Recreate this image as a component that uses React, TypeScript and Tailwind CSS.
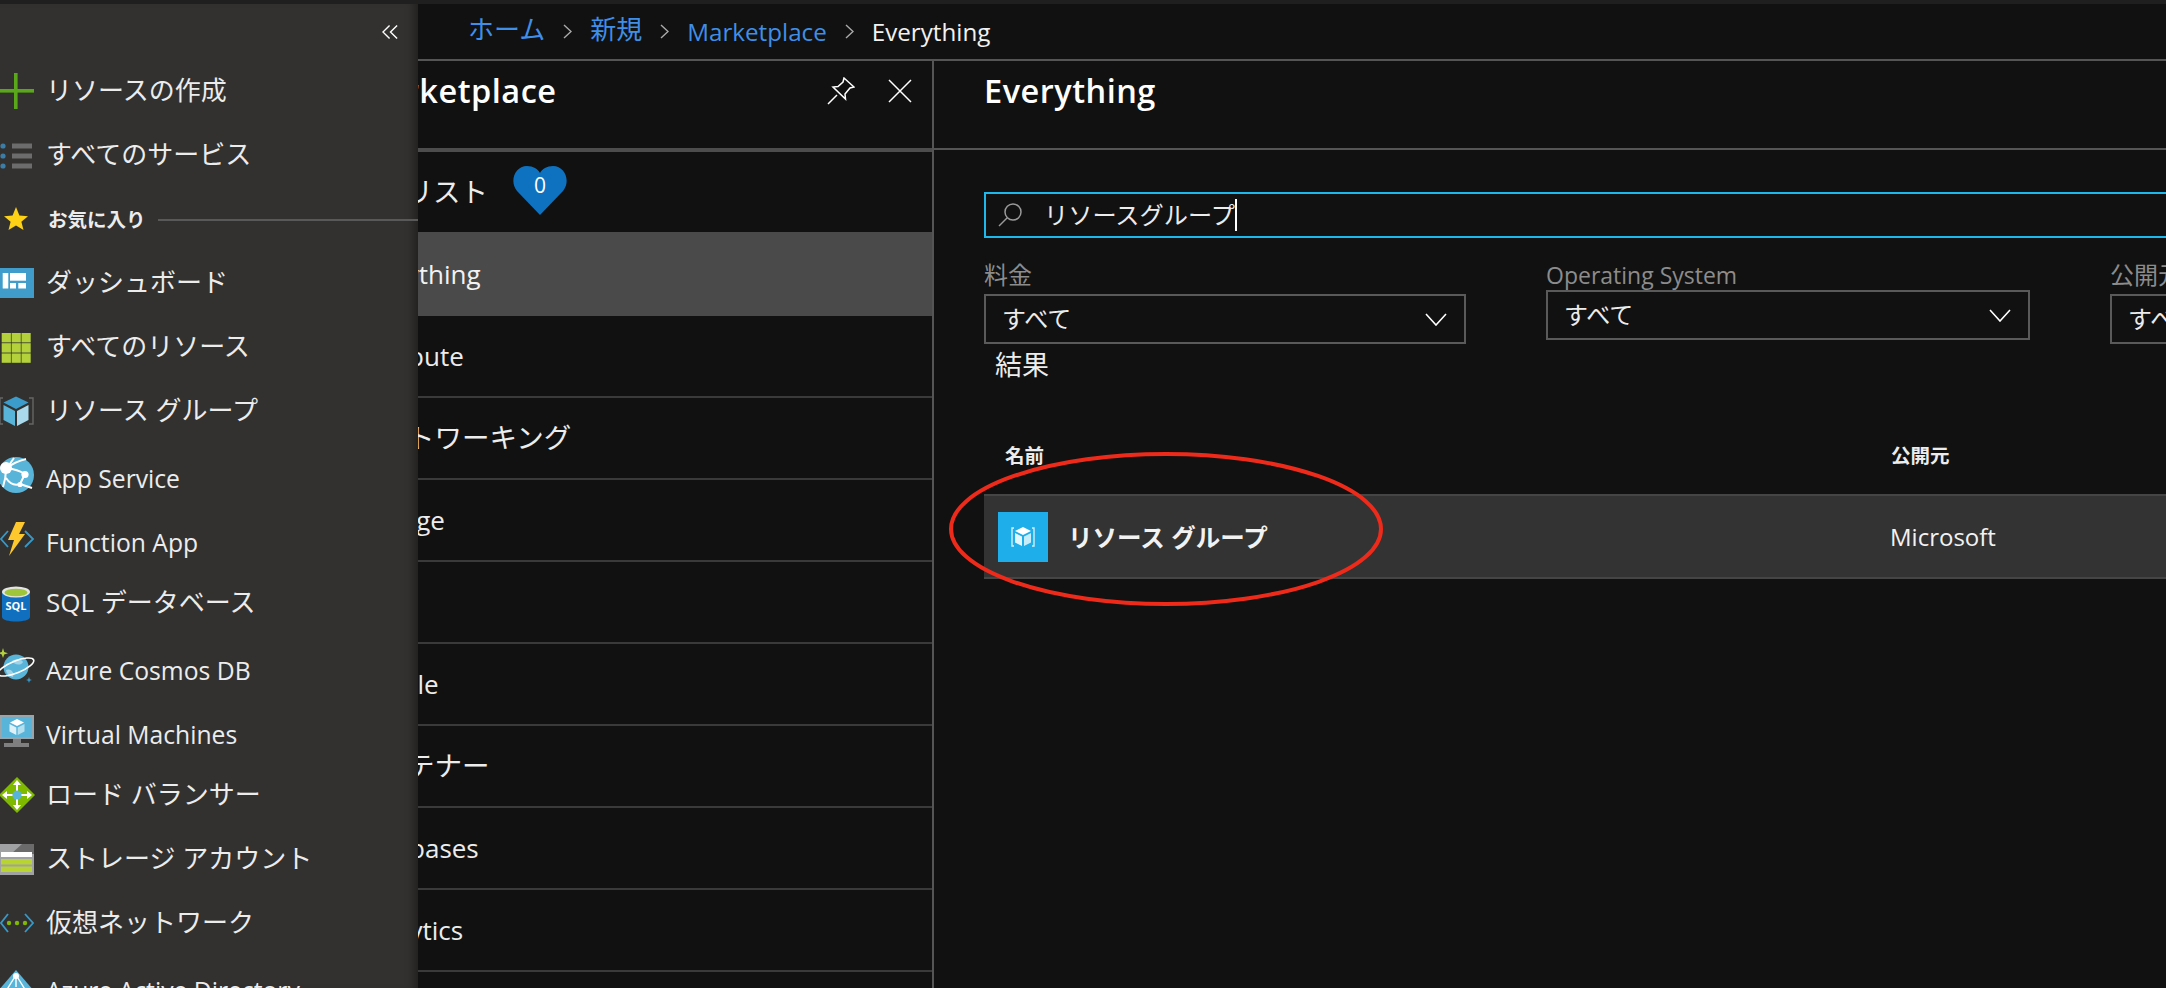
import type { ReactNode } from "react";

// Latin labels sit slightly lower and smaller than the Japanese ones in the reference
const isLatin = (text: string) => /^[\x00-\x7f]+$/.test(text);

function IconBox({ children }: { children: ReactNode }) {
  return (
    <svg viewBox="0 0 36 36" className="w-9 h-9 -ml-0.5 shrink-0 overflow-visible">
      {children}
    </svg>
  );
}

const PlusIcon = () => (
  <IconBox>
    <rect x="16" y="0" width="3.6" height="36" fill="#5ba71c" />
    <rect x="0" y="16" width="36" height="3.6" fill="#5ba71c" />
  </IconBox>
);

const ServicesIcon = () => (
  <IconBox>
    {[9, 19, 29].map((y) => (
      <g key={y}>
        <circle cx="5" cy={y} r="2.6" fill="#3a7ea8" />
        <rect x="14" y={y - 2.5} width="20" height="5" fill="#6c6c6c" />
      </g>
    ))}
  </IconBox>
);

const StarIcon = () => (
  <IconBox>
    <polygon points="18,6 21.4,14.6 30,15.2 23.4,20.8 25.5,29 18,24.5 10.5,29 12.6,20.8 6,15.2 14.6,14.6" fill="#fcd116" />
  </IconBox>
);

const DashboardIcon = () => (
  <IconBox>
    <rect x="2" y="3" width="34" height="30" fill="#3f9ccb" />
    <rect x="4.7" y="8" width="5.6" height="15.5" fill="#fff" />
    <rect x="12" y="8" width="16" height="7.7" fill="#fff" />
    <rect x="12" y="18" width="6" height="5.5" fill="#fff" />
    <rect x="20.3" y="18" width="7.7" height="5.5" fill="#fff" />
  </IconBox>
);

const GridIcon = () => (
  <IconBox>
    {[4, 14.2, 24.4].flatMap((y) =>
      [3.7, 13.6, 23.5].map((x) => <rect key={`${x}-${y}`} x={x} y={y} width="9.2" height="9.4" fill="#b4d13c" />)
    )}
  </IconBox>
);

const CubeIcon = () => (
  <IconBox>
    <path d="M5 5H2L2 31H5M31 5H35V31H31" fill="none" stroke="#666" strokeWidth="1.4" />
    <path d="M18 3.5L30.5 9.5L18 16L5.5 9.5Z" fill="#3b9ccc" />
    <path d="M5.5 12L17 18V33L5.5 27Z" fill="#59b4d9" />
    <path d="M30.5 12L19 18V33L30.5 27Z" fill="#a9d9ea" />
  </IconBox>
);

const AppServiceIcon = () => (
  <IconBox>
    <circle cx="18" cy="18" r="18" fill="#59b4d9" />
    <path d="M9 11L16 1M9 11C14 7 20 4 28 2M9 11C16 12 22 14 27 17M8 12C8 18 7 24 5 30M27 17L22 27M22 27L34 31M22 27C16 29 12 27 8 21" fill="none" stroke="#fff" strokeWidth="2" />
    <circle cx="8" cy="11" r="6" fill="#fff" />
    <circle cx="27" cy="17.5" r="3.6" fill="#fff" />
    <circle cx="22" cy="27.5" r="2.6" fill="#fff" />
  </IconBox>
);

const FunctionIcon = () => (
  <IconBox>
    <path d="M10 10L3 18L10 26M27 10L35 18L27 26" fill="none" stroke="#3999c6" strokeWidth="1.8" />
    <path d="M18 1H27L21 13H27L11 35L16 19H10Z" fill="#fcc82e" />
  </IconBox>
);

const SqlIcon = () => (
  <IconBox>
    <path d="M4 7V32C4 38 32 38 32 32V7Z" fill="#1070bf" />
    <ellipse cx="18" cy="7" rx="14" ry="5.5" fill="#e4e4e4" />
    <ellipse cx="18" cy="7.5" rx="11.5" ry="3.8" fill="#9fc63b" />
    <text x="18" y="25" textAnchor="middle" fontSize="11" fontWeight="700" fill="#fff" fontFamily="Open Sans">SQL</text>
  </IconBox>
);

const CosmosIcon = () => (
  <IconBox>
    <circle cx="18" cy="18" r="12.5" fill="#59b4d9" />
    <path d="M14 12C18 9 24 10 25 13C23 17 16 16 14 12ZM8 21C12 19 17 23 15 28C11 27 8 24 8 21Z" fill="#9fd3e8" />
    <ellipse cx="18" cy="18" rx="19" ry="6" transform="rotate(-22 18 18)" fill="none" stroke="#fff" strokeWidth="1.6" />
    <path d="M5 -1L6.2 3L10 4.2L6.2 5.4L5 9L3.8 5.4L0 4.2L3.8 3Z" fill="#b4d13c" />
    <path d="M31 28L31.8 30.2L34 31L31.8 31.8L31 34L30.2 31.8L28 31L30.2 30.2Z" fill="#3999c6" />
  </IconBox>
);

const VmIcon = () => (
  <IconBox>
    <rect x="2" y="2" width="34" height="24" fill="#9aa5ab" />
    <rect x="4" y="4" width="30" height="20" fill="#59b4d9" />
    <path d="M19 6L26 9.5L19 13L12 9.5Z" fill="#fff" />
    <path d="M11.5 11L18.3 14.5V22L11.5 18.5Z" fill="#dff1f8" />
    <path d="M26.5 11L19.7 14.5V22L26.5 18.5Z" fill="#b4dfee" />
    <rect x="15" y="26" width="8" height="4" fill="#7f7f7f" />
    <rect x="6" y="30" width="25" height="4" fill="#7f7f7f" />
  </IconBox>
);

const BalancerIcon = () => (
  <IconBox>
    <path d="M19 0L37 18L19 36L1 18Z" fill="#7fba00" />
    <path d="M19 5V31M6 18H32" stroke="#fff" strokeWidth="2" />
    <path d="M19 3L23 8H15ZM19 33L23 28H15ZM4 18L9 14V22ZM34 18L29 14V22Z" fill="#fff" />
    <circle cx="19" cy="18" r="4.6" fill="#59b4d9" />
  </IconBox>
);

const StorageIcon = () => (
  <IconBox>
    <rect x="2" y="3" width="34" height="31" fill="#a0a1a2" />
    <path d="M24 3H36V13H13Z" fill="#6b6b6b" />
    <rect x="3" y="11" width="31" height="5" fill="#fff" />
    <rect x="3" y="18" width="31" height="5.5" fill="#b8d432" />
    <rect x="3" y="25.5" width="31" height="5.5" fill="#b8d432" />
  </IconBox>
);

const VnetIcon = () => (
  <IconBox>
    <path d="M10 9L3 18L10 27M27 9L35 18L27 27" fill="none" stroke="#3999c6" strokeWidth="1.8" />
    <circle cx="11" cy="18" r="2.2" fill="#7fba00" />
    <circle cx="19" cy="18" r="2.2" fill="#7fba00" />
    <circle cx="27" cy="18" r="2.2" fill="#7fba00" />
  </IconBox>
);

const DirectoryIcon = () => (
  <IconBox>
    <path d="M18 1L36 22L18 36L0 22Z" fill="#59b4d9" />
    <path d="M18 6L8 22M18 6L28 22M18 6V18" stroke="#fff" strokeWidth="1.4" />
    <circle cx="18" cy="7" r="3" fill="#fff" />
    <circle cx="8" cy="22" r="3" fill="#fff" />
    <circle cx="28" cy="22" r="3" fill="#fff" />
  </IconBox>
);

const navTop = [
  { icon: <PlusIcon />, label: "リソースの作成" },
  { icon: <ServicesIcon />, label: "すべてのサービス" },
];

const navFavorites = [
  { icon: <DashboardIcon />, label: "ダッシュボード" },
  { icon: <GridIcon />, label: "すべてのリソース" },
  { icon: <CubeIcon />, label: "リソース グループ" },
  { icon: <AppServiceIcon />, label: "App Service" },
  { icon: <FunctionIcon />, label: "Function App" },
  { icon: <SqlIcon />, label: "SQL データベース" },
  { icon: <CosmosIcon />, label: "Azure Cosmos DB" },
  { icon: <VmIcon />, label: "Virtual Machines" },
  { icon: <BalancerIcon />, label: "ロード バランサー" },
  { icon: <StorageIcon />, label: "ストレージ アカウント" },
  { icon: <VnetIcon />, label: "仮想ネットワーク" },
  { icon: <DirectoryIcon />, label: "Azure Active Directory" },
];

function NavItem({ icon, label }: { icon: ReactNode; label: string }) {
  const latin = isLatin(label);
  return (
    <div className="flex items-center h-16 shrink-0">
      {icon}
      <span
        className={`text-[#ececec] whitespace-nowrap ${
          latin ? "ml-3 mt-2 text-[24.7px]" : "ml-3 -mt-px text-[26px]"
        }`}
      >
        {label}
      </span>
    </div>
  );
}

function Sidebar() {
  return (
    <aside className="absolute left-0 top-1 bottom-0 w-[418px] flex flex-col overflow-hidden bg-[#32312f] shadow-[inset_-10px_0_8px_-6px_rgba(0,0,0,0.35)]">
      <div className="h-[55px] shrink-0 flex items-center justify-end pr-[19px]">
        <svg viewBox="0 0 18 16" className="w-[17px] h-4" fill="none" stroke="#fff" strokeWidth="1.5">
          <path d="M8 1L1 8L8 15M16 1L9 8L16 15" />
        </svg>
      </div>
      {navTop.map((item) => (
        <NavItem key={item.label} {...item} />
      ))}
      <div className="flex items-center h-16 shrink-0">
        <StarIcon />
        <span className="ml-3.5 mt-0.5 text-[19.5px] font-bold text-[#ececec] whitespace-nowrap">お気に入り</span>
        <div className="ml-3 mt-0.5 flex-1 h-0.5 bg-[#595959]" />
      </div>
      {navFavorites.map((item) => (
        <NavItem key={item.label} {...item} />
      ))}
    </aside>
  );
}

const categories = ["Compute", "ネットワーキング", "Storage", "Web", "Mobile", "コンテナー", "Databases", "Analytics", "AI + Cognitive"];

function MarketplacePanel() {
  return (
    <section className="w-[934px] shrink-0 border-r-2 border-[#555]">
      <header className="h-[91px] pl-[355px] pr-5 flex items-start border-b-4 border-[#4d4d4d]">
        <h2 className="mt-2 text-[32.5px] font-semibold text-white leading-[44px] tracking-[0.5px]">Marketplace</h2>
        <div className="ml-auto flex items-center gap-[33px] mt-4">
          <svg viewBox="0 0 28 28" className="w-7 h-7" fill="none" stroke="#fff" strokeWidth="1.5">
            <path d="M1 27L10 18M17 1L27 10L23 11L18 17L18.5 22L6 10L11 9.5L16 5Z" />
          </svg>
          <svg viewBox="0 0 24 24" className="w-6 h-6" fill="none" stroke="#fff" strokeWidth="1.5">
            <path d="M1 1L23 23M23 1L1 23" />
          </svg>
        </div>
      </header>
      <div className="h-20 pl-[268px] flex items-center">
        <span className="text-[27.5px] text-[#ececec] whitespace-nowrap">ウィッシュリスト</span>
        <div className="relative ml-6 -mt-1 w-14 h-[50px] flex items-center justify-center">
          <svg viewBox="0 0 56 50" className="absolute inset-0 w-14 h-[50px]">
            <path d="M28 50L5 26C-3 16 3 1 15 1C21 1 26 4 28 8C30 4 35 1 41 1C53 1 59 16 51 26Z" fill="#0f72c0" />
          </svg>
          <span className="relative text-[21px] text-white -mt-2">0</span>
        </div>
      </div>
      <div className="h-[84px] pl-[353px] flex items-center bg-[#4a4a4a] text-[26px] text-[#f2f2f2]">Everything</div>
      {categories.map((name) => (
        <div
          key={name}
          className={`h-[82px] flex items-center border-b-2 border-[#3a3a3a] text-[#ececec] whitespace-nowrap ${
            isLatin(name) ? "text-[26px]" : "text-[27.5px]"
          } ${name === "Mobile" || name === "Analytics" ? "pl-[356px]" : "pl-[352px]"}`}
        >
          {name}
        </div>
      ))}
    </section>
  );
}

function Filter({ label, labelClass, width }: { label: string; labelClass: string; width: string }) {
  return (
    <div className={`${width} shrink-0`}>
      <div className={`${labelClass} leading-[30px] text-[#8c8c8c]`}>{label}</div>
      <div className="h-[50px] pl-[16px] pr-[17px] flex items-center justify-between border-2 border-[#5a5a5a] text-[24px] text-[#ececec]">
        <span>すべて</span>
        <svg viewBox="0 0 22 13" className="w-[22px] h-[13px]" fill="none" stroke="#fff" strokeWidth="1.6">
          <path d="M1 1L11 12L21 1" />
        </svg>
      </div>
    </div>
  );
}

function EverythingPanel() {
  return (
    <section className="flex-1 min-w-0">
      <header className="h-[89px] pl-[50px] border-b-2 border-[#555] flex items-start">
        <h2 className="mt-2 text-[32.5px] font-semibold text-white leading-[44px] tracking-[0.5px]">Everything</h2>
      </header>
      <div className="pl-[50px] w-[1400px]">
        <div className="mt-[42px] h-[46px] flex items-center border-2 border-[#1fb8ec]">
          <svg viewBox="0 0 24 24" className="ml-3 w-6 h-6" fill="none" stroke="#9a9a9a" strokeWidth="1.5">
            <circle cx="15" cy="9" r="8" />
            <path d="M9 15L1 23" />
          </svg>
          <span className="ml-[22px] text-[24.2px] text-[#ececec]">リソースグループ</span>
          <div className="w-0.5 h-8 bg-white" />
        </div>
        <div className="mt-[22px] flex items-start gap-20">
          <Filter label="料金" labelClass="h-[34px] text-[24px]" width="w-[482px]" />
          <Filter label="Operating System" labelClass="h-[30px] text-[23px]" width="w-[484px]" />
          <Filter label="公開元" labelClass="h-[34px] text-[24px]" width="w-[300px]" />
        </div>
        <div className="ml-[11px] mt-[3px] h-[36px] text-[27px] leading-[36px] text-[#ececec]">結果</div>
        <div className="h-[111px] pt-[58px] flex text-[19.5px] font-bold text-[#ececec]">
          <span className="w-[907px] pl-[21px]">名前</span>
          <span>公開元</span>
        </div>
        <div className="h-[85px] flex items-center bg-[#333] border-y-2 border-[#454545]">
          <div className="w-[906px] flex items-center pl-3.5">
            <div className="w-[50px] h-[50px] flex items-center justify-center bg-[#1eaeea]">
              <svg viewBox="0 0 26 24" className="w-[26px] h-6">
                <path d="M4 3H2V21H4M22 3H24V21H22" fill="none" stroke="#cfeefb" strokeWidth="1.4" />
                <path d="M13 2L21 6L13 10L5 6Z" fill="#fff" />
                <path d="M5 8L12 11.5V21L5 17.5Z" fill="#e4f6fd" />
                <path d="M21 8L14 11.5V21L21 17.5Z" fill="#c7ecfa" />
              </svg>
            </div>
            <span className="ml-5 mt-[3px] text-[24.5px] font-bold text-[#f2f2f2]">リソース グループ</span>
          </div>
          <span className="text-[24px] text-[#f2f2f2]">Microsoft</span>
        </div>
      </div>
    </section>
  );
}

function Crumb({ children, jp }: { children: ReactNode; jp?: boolean }) {
  return <span className={jp ? "text-[#3f8fe8] text-[26px] -mt-1" : "text-[#3f8fe8] text-[24.2px] mt-0.5"}>{children}</span>;
}

const Sep = () => (
  <svg viewBox="0 0 9 15" className="w-[9px] h-[15px] mx-[18px]" fill="none" stroke="#aaa" strokeWidth="1.4">
    <path d="M1 1L8 7.5L1 14" />
  </svg>
);

export default function App() {
  return (
    <div className="relative w-[2166px] h-[988px] overflow-hidden flex flex-col bg-[#111] font-['Open_Sans','Noto_Sans_CJK_JP',sans-serif]">
      <div className="h-1 shrink-0 bg-[#1f1f1f]" />
      <nav className="h-[57px] shrink-0 pl-[468px] flex items-center border-b-2 border-[#555]">
        <Crumb jp>ホーム</Crumb>
        <Sep />
        <Crumb jp>新規</Crumb>
        <Sep />
        <Crumb>Marketplace</Crumb>
        <Sep />
        <span className="mt-0.5 text-[#f2f2f2] text-[24.2px]">Everything</span>
      </nav>
      <main className="flex flex-1 min-h-0">
        <MarketplacePanel />
        <EverythingPanel />
      </main>
      <Sidebar />
      {/* hand-drawn annotation over the result row */}
      <svg className="absolute left-[945px] top-[448px] w-[445px] h-[165px]" viewBox="0 0 445 165" fill="none">
        <ellipse cx="221" cy="81" rx="215" ry="75" stroke="#ee2a1b" strokeWidth="4" />
      </svg>
    </div>
  );
}
